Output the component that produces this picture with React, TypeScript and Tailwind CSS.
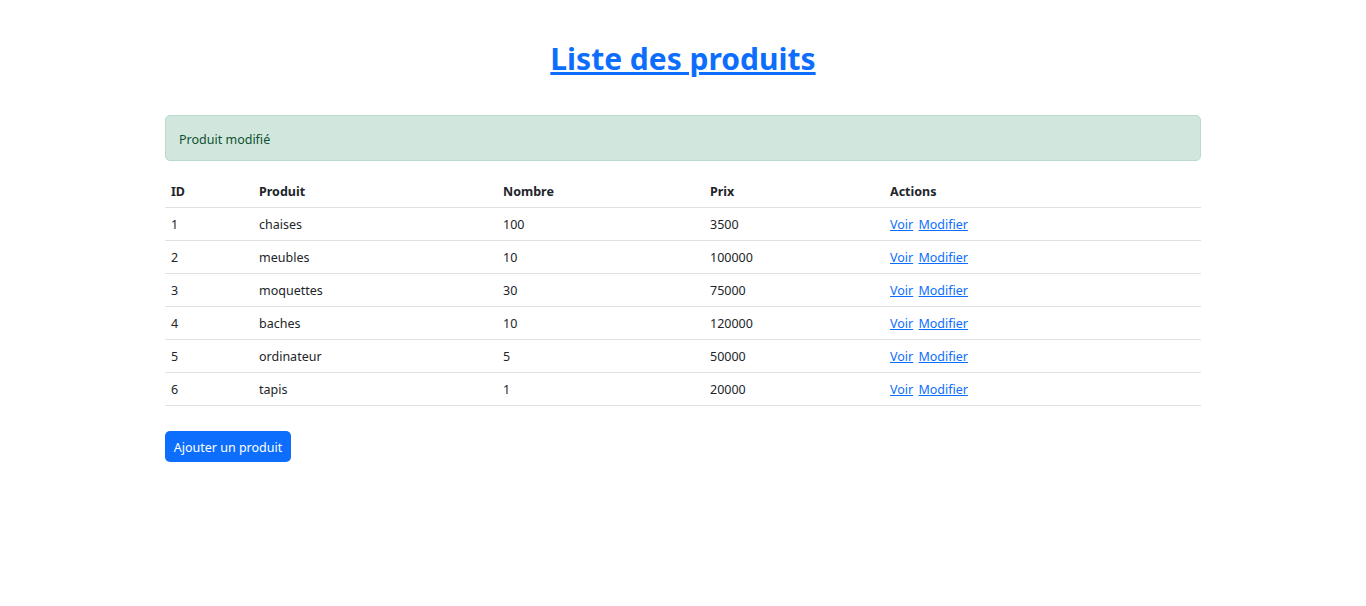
import React from "react";

const rows = [
  { id: 1, name: "chaises", n: 100, p: 3500 },
  { id: 2, name: "meubles", n: 10, p: 100000 },
  { id: 3, name: "moquettes", n: 30, p: 75000 },
  { id: 4, name: "baches", n: 10, p: 120000 },
  { id: 5, name: "ordinateur", n: 5, p: 50000 },
  { id: 6, name: "tapis", n: 1, p: 20000 },
];

export default function App() {
  return (
    <div
      className="min-h-[606px] bg-white text-[#212529] text-[12.5px] leading-[1.5]"
      style={{ fontFamily: '"Noto Sans", "Open Sans", sans-serif' }}
    >
      <div className="w-[1036px] mx-auto">
        <h1 className="pt-[40px] pb-[37px] text-center text-[30px] leading-[38px] font-bold">
          <a href="#" className="text-[#0d6efd] underline">
            Liste des produits
          </a>
        </h1>
        <div className="h-[46px] flex items-center pt-[5px] px-[13px] bg-[#d1e7dd] border border-[#badbcc] rounded-[5px] text-[#0f5132]">
          Produit modifié
        </div>
        <table className="w-full mt-[13px] border-collapse">
          <thead>
            <tr className="h-[33px] border-b border-[#dee2e6] text-left">
              <th className="w-[88px] px-[6px] pt-[4px] font-bold">ID</th>
              <th className="w-[244px] px-[6px] pt-[4px] font-bold">Produit</th>
              <th className="w-[207px] px-[6px] pt-[4px] font-bold">Nombre</th>
              <th className="w-[180px] px-[6px] pt-[4px] font-bold">Prix</th>
              <th className="px-[6px] pt-[4px] font-bold">Actions</th>
            </tr>
          </thead>
          <tbody>
            {rows.map((r) => (
              <tr key={r.id} className="h-[33px] border-b border-[#dee2e6]">
                <td className="px-[6px] pt-[4px]">{r.id}</td>
                <td className="px-[6px] pt-[4px]">{r.name}</td>
                <td className="px-[6px] pt-[4px]">{r.n}</td>
                <td className="px-[6px] pt-[4px]">{r.p}</td>
                <td className="px-[6px] pt-[4px]">
                  <a href="#" className="text-[#0d6efd] underline">
                    Voir
                  </a>{" "}
                  <a href="#" className="text-[#0d6efd] underline ml-[2px]">
                    Modifier
                  </a>
                </td>
              </tr>
            ))}
          </tbody>
        </table>
        <button className="mt-[25px] h-[31px] w-[126px] text-center pt-[4px] bg-[#0d6efd] text-white rounded-[5px] leading-none">
          Ajouter un produit
        </button>
      </div>
    </div>
  );
}
